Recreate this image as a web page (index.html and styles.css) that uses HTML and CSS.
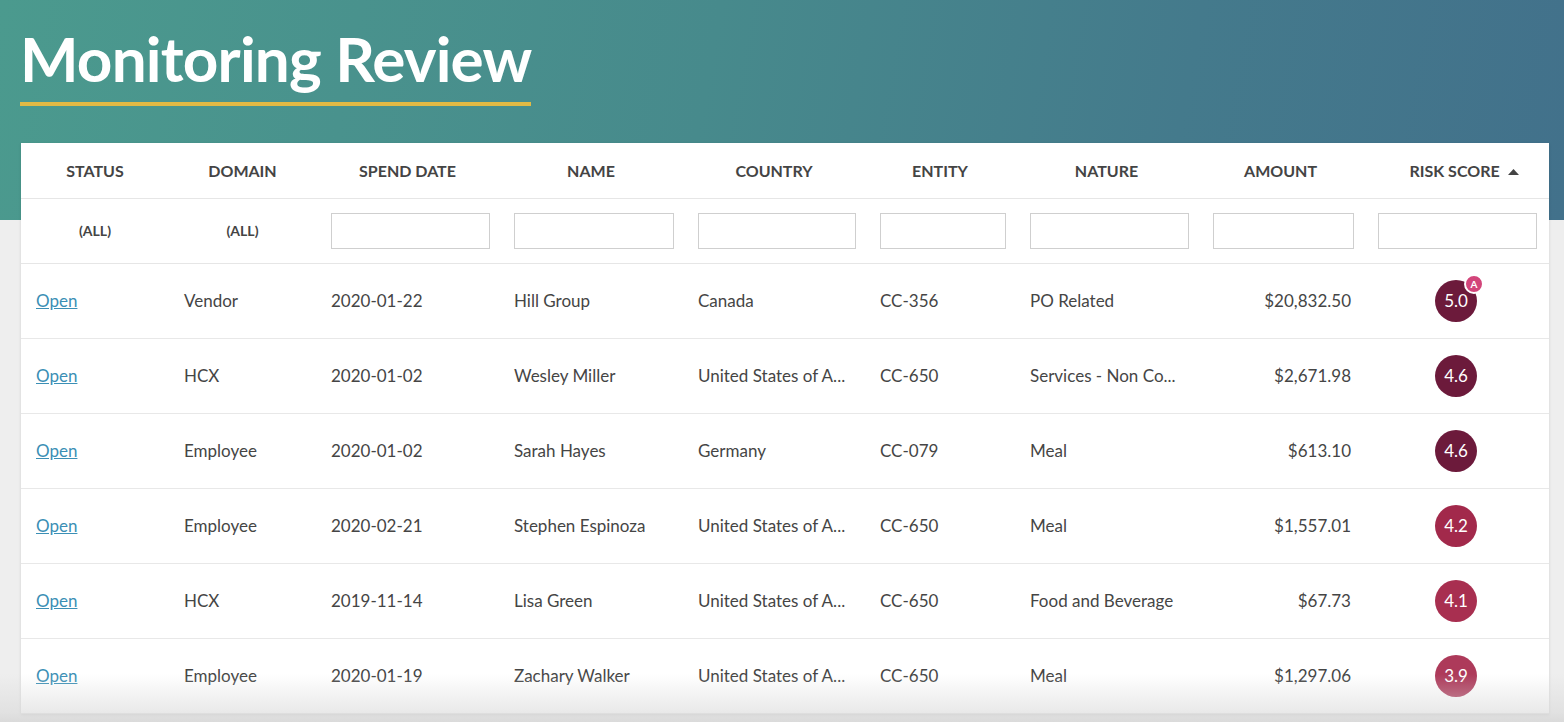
FILE: index.html
```html
<!DOCTYPE html>
<html lang="en">
<head>
<meta charset="utf-8">
<title>Monitoring Review</title>
<link rel="stylesheet" href="styles.css">
</head>
<body>
<div class="page">
  <header class="hero">
    <h1 class="title">Monitoring Review</h1>
  </header>
  <main class="card">
    <table class="grid">
      <colgroup>
        <col class="c-status"><col class="c-domain"><col class="c-date"><col class="c-name"><col class="c-country"><col class="c-entity"><col class="c-nature"><col class="c-amount"><col class="c-risk">
      </colgroup>
      <thead>
        <tr class="head-row">
          <th>STATUS</th>
          <th>DOMAIN</th>
          <th>SPEND DATE</th>
          <th>NAME</th>
          <th>COUNTRY</th>
          <th>ENTITY</th>
          <th>NATURE</th>
          <th>AMOUNT</th>
          <th class="sorted">RISK SCORE <svg class="sort-arrow" width="11" height="7" viewBox="0 0 11 7"><path d="M0 7 L5.5 1 L11 7 Z" fill="#444"/></svg></th>
        </tr>
        <tr class="filter-row">
          <td class="all">(ALL)</td>
          <td class="all">(ALL)</td>
          <td><input class="filter" type="text"></td>
          <td><input class="filter" type="text"></td>
          <td><input class="filter" type="text"></td>
          <td><input class="filter" type="text"></td>
          <td><input class="filter" type="text"></td>
          <td><input class="filter" type="text"></td>
          <td class="last"><input class="filter" type="text"></td>
        </tr>
      </thead>
      <tbody>
        <tr>
          <td><a class="link" href="#">Open</a></td>
          <td>Vendor</td>
          <td>2020-01-22</td>
          <td>Hill Group</td>
          <td class="trunc">Canada</td>
          <td>CC-356</td>
          <td class="trunc">PO Related</td>
          <td class="amount">$20,832.50</td>
          <td class="risk"><span class="score s-high">5.0<span class="flag">A</span></span></td>
        </tr>
        <tr>
          <td><a class="link" href="#">Open</a></td>
          <td>HCX</td>
          <td>2020-01-02</td>
          <td>Wesley Miller</td>
          <td class="trunc">United States of A...</td>
          <td>CC-650</td>
          <td class="trunc">Services - Non Co...</td>
          <td class="amount">$2,671.98</td>
          <td class="risk"><span class="score s-high">4.6</span></td>
        </tr>
        <tr>
          <td><a class="link" href="#">Open</a></td>
          <td>Employee</td>
          <td>2020-01-02</td>
          <td>Sarah Hayes</td>
          <td class="trunc">Germany</td>
          <td>CC-079</td>
          <td class="trunc">Meal</td>
          <td class="amount">$613.10</td>
          <td class="risk"><span class="score s-high">4.6</span></td>
        </tr>
        <tr>
          <td><a class="link" href="#">Open</a></td>
          <td>Employee</td>
          <td>2020-02-21</td>
          <td>Stephen Espinoza</td>
          <td class="trunc">United States of A...</td>
          <td>CC-650</td>
          <td class="trunc">Meal</td>
          <td class="amount">$1,557.01</td>
          <td class="risk"><span class="score s-mid">4.2</span></td>
        </tr>
        <tr>
          <td><a class="link" href="#">Open</a></td>
          <td>HCX</td>
          <td>2019-11-14</td>
          <td>Lisa Green</td>
          <td class="trunc">United States of A...</td>
          <td>CC-650</td>
          <td class="trunc">Food and Beverage</td>
          <td class="amount">$67.73</td>
          <td class="risk"><span class="score s-mid2">4.1</span></td>
        </tr>
        <tr>
          <td><a class="link" href="#">Open</a></td>
          <td>Employee</td>
          <td>2020-01-19</td>
          <td>Zachary Walker</td>
          <td class="trunc">United States of A...</td>
          <td>CC-650</td>
          <td class="trunc">Meal</td>
          <td class="amount">$1,297.06</td>
          <td class="risk"><span class="score s-low">3.9</span></td>
        </tr>
      </tbody>
    </table>
  </main>
  <div class="fade"></div>
</div>
</body>
</html>
```
FILE: styles.css
```css
* { box-sizing: border-box; }
html, body { margin: 0; padding: 0; }
body {
  font-family: "Lato", "Open Sans", sans-serif;
  color: #454545;
  background: #efefef;
  overflow: hidden;
}
.page {
  position: relative;
  height: 722px;
  overflow: hidden;
  background:
    linear-gradient(100deg, #4b9a8e 0%, #478a8c 45%, #447a8c 75%, #42718b 100%) top left / 100% 220px no-repeat,
    #eeeeee;
}
.hero {
  padding: 27px 0 0 20px;
}
.title {
  display: inline-block;
  margin: 0;
  font-size: 62px;
  line-height: 62px;
  font-weight: 700;
  color: #ffffff;
  letter-spacing: -0.8px;
  padding-bottom: 13px;
  border-bottom: 4px solid #e2ba44;
}
.card {
  margin: 37px 15px 0 21px;
  background: #ffffff;
  box-shadow: 0 1px 3px rgba(0, 0, 0, 0.12);
}
.grid {
  width: 100%;
  border-collapse: collapse;
  table-layout: fixed;
  font-size: 17px;
}
.c-status { width: 148px; }
.c-domain { width: 147px; }
.c-date { width: 183px; }
.c-name { width: 184px; }
.c-country { width: 182px; }
.c-entity { width: 150px; }
.c-nature { width: 183px; }
.c-amount { width: 165px; }
.c-risk { width: 186px; }

.head-row th {
  height: 55px;
  font-size: 16px;
  font-weight: 700;
  color: #444;
  text-align: center;
  border-bottom: 1px solid #e6e6e6;
  padding: 0;
}
.head-row th.sorted { padding-left: 16px; }
.sort-arrow { margin-left: 4px; vertical-align: 2px; }

.filter-row td {
  height: 65px;
  border-bottom: 1px solid #e6e6e6;
  padding: 0 9px 0 15px;
}
.filter-row td.last { padding-right: 12px; }
.filter-row td.all {
  text-align: center;
  font-size: 14px;
  font-weight: 700;
  color: #444;
  padding: 0;
}
.filter {
  display: block;
  width: 100%;
  height: 36px;
  border: 1px solid #cfcfcf;
  background: #fff;
  margin: 0;
  padding: 0 8px;
  font: inherit;
}
tbody td {
  height: 75px;
  padding: 0 10px 0 15px;
  border-bottom: 1px solid #e8e8e8;
  white-space: nowrap;
  overflow: hidden;
  color: #454545;
}
tbody td.amount { text-align: right; padding: 0 12px 0 0; }
tbody td.risk { text-align: center; padding: 0; overflow: visible; }
.link { color: #3b8fb5; text-decoration: underline; }

.score {
  position: relative;
  display: inline-flex;
  align-items: center;
  justify-content: center;
  width: 42px;
  height: 42px;
  border-radius: 50%;
  color: #fff;
  font-size: 17px;
  vertical-align: middle;
}
.s-high { background: #6c1a3b; }
.s-mid { background: #a2294b; }
.s-mid2 { background: #a82f50; }
.s-low { background: #ad3a5a; }
.flag {
  position: absolute;
  top: -6px;
  right: -7px;
  width: 20px;
  height: 20px;
  border-radius: 50%;
  background: #d2457a;
  border: 2px solid #fff;
  color: #fff;
  font-size: 10px;
  font-weight: 700;
  display: flex;
  align-items: center;
  justify-content: center;
}
.fade {
  position: absolute;
  left: 0;
  right: 0;
  bottom: 0;
  height: 48px;
  background: linear-gradient(to bottom, rgba(225,225,225,0) 0%, rgba(215,215,215,0.55) 80%, rgba(210,210,210,0.7) 100%);
  pointer-events: none;
}
```
